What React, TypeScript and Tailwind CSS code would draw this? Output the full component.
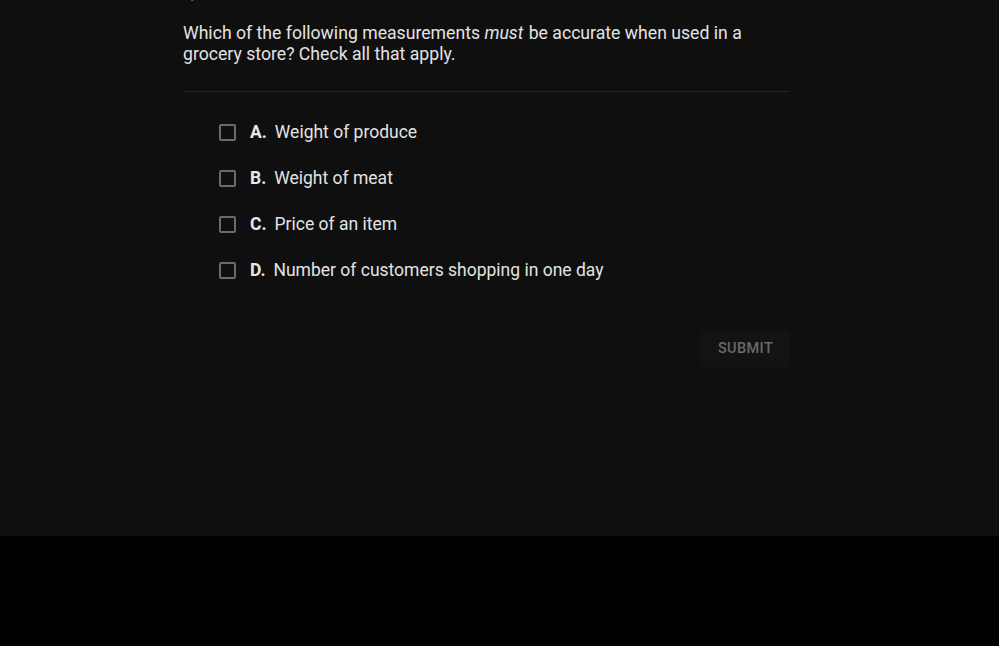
const options = [
  { letter: 'A.', text: 'Weight of produce' },
  { letter: 'B.', text: 'Weight of meat' },
  { letter: 'C.', text: 'Price of an item' },
  { letter: 'D.', text: 'Number of customers shopping in one day' },
];

export default function App() {
  return (
    <div className="w-[999px] h-[646px] bg-black overflow-hidden" style={{ fontFamily: 'Roboto, sans-serif' }}>
      <div className="h-[536px] bg-[#0f0f0f] overflow-hidden">
        <div className="ml-[183px] w-[607px]">
          <div className="-mt-[14px] h-[16px] text-[16px] leading-[16px] text-[#d0d0d0]">Q</div>
          <p className="mt-[21px] text-[17.65px] leading-[21px] text-[#e3e3e3]">
            Which of the following measurements <em className="mr-[1px]">must</em> be accurate when used in a
            grocery store? Check all that apply.
          </p>
          <div className="mt-[26px] h-px bg-[#242424]" />
          <div className="mt-[30px] ml-[36px] flex flex-col gap-[26px]">
            {options.map((o) => (
              <label key={o.letter} className="flex items-center h-[20px]">
                <span className="w-[17px] h-[17px] border-2 border-[#6a6a6a] rounded-[2px] mr-[14px]" />
                <span className="font-bold text-[17.5px] text-[#e8e8e8] mr-[8px]">{o.letter}</span>
                <span className="text-[17.5px] text-[#e3e3e3]">{o.text}</span>
              </label>
            ))}
          </div>
          <div className="mt-[51px] flex justify-end">
            <button className="w-[89px] h-[36px] bg-[#131313] rounded text-[14.5px] font-medium text-[#6a6a6a] tracking-[0.4px]">
              SUBMIT
            </button>
          </div>
        </div>
      </div>
    </div>
  );
}
